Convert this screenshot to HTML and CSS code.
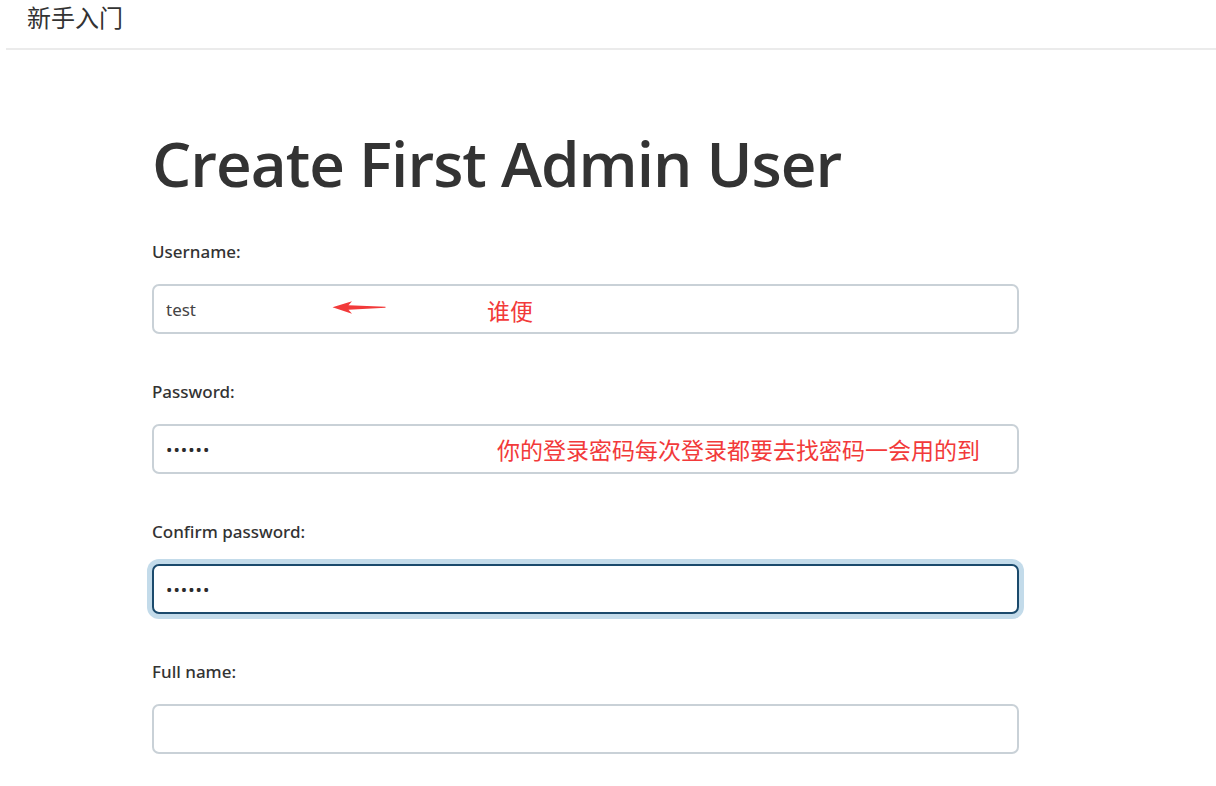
FILE: index.html
```html
<!DOCTYPE html>
<html lang="zh-CN">
<head>
<meta charset="utf-8">
<title>Create First Admin User</title>
<link rel="stylesheet" href="styles.css">
</head>
<body>
<header class="topbar">
  <span class="topbar-title">新手入门</span>
</header>
<main class="content">
  <h1 class="title">Create First Admin User</h1>
  <form class="form">
    <div class="field">
      <label class="label" for="username">Username:</label>
      <div class="input-wrap">
        <input class="input" id="username" type="text" value="test">
        <svg class="note-arrow" width="54" height="13" viewBox="0 0 54 13" aria-hidden="true">
          <path d="M0.5 6.3 L20 0.3 L16.5 4.2 L53.5 5.8 L53.5 6.8 L16.5 8.7 L20 12.7 Z" fill="#f23a3a"/>
        </svg>
        <span class="note note-user">谁便</span>
      </div>
    </div>
    <div class="field">
      <label class="label" for="password">Password:</label>
      <div class="input-wrap">
        <input class="input input-pass" id="password" type="password" value="123456">
        <span class="note note-pass">你的登录密码每次登录都要去找密码一会用的到</span>
      </div>
    </div>
    <div class="field">
      <label class="label" for="confirm">Confirm password:</label>
      <div class="input-wrap">
        <input class="input input-pass is-focused" id="confirm" type="password" value="123456">
      </div>
    </div>
    <div class="field">
      <label class="label" for="fullname">Full name:</label>
      <div class="input-wrap">
        <input class="input" id="fullname" type="text" value="">
      </div>
    </div>
  </form>
</main>
</body>
</html>
```

FILE: styles.css
```css
html, body {
  margin: 0;
  padding: 0;
  background: #ffffff;
  overflow: hidden;
}

body {
  font-family: "Noto Sans", "Open Sans", "Noto Sans CJK SC", sans-serif;
  color: #333333;
}

.topbar {
  margin-left: 6px;
  height: 48px;
  padding-left: 21px;
  border-bottom: 2px solid #ebebeb;
}

.topbar-title {
  display: block;
  font-family: "Noto Sans CJK SC", sans-serif;
  font-size: 24px;
  line-height: 34px;
  color: #333333;
}

.content {
  padding-left: 152px;
  width: 867px;
}

.title {
  margin: 76px 0 42px 0;
  font-family: "Open Sans", "Noto Sans", sans-serif;
  font-weight: 600;
  font-size: 62px;
  line-height: 1.2;
  color: #333333;
  letter-spacing: -1px;
}

.form {
  margin: 0;
}

.field {
  margin-bottom: 48px;
}

.label {
  display: block;
  font-size: 17px;
  line-height: 20px;
  font-weight: 500;
  color: #333333;
  margin-bottom: 22px;
}

.input-wrap {
  position: relative;
}

.input {
  display: block;
  box-sizing: border-box;
  width: 867px;
  height: 50px;
  margin: 0;
  padding: 0 12px;
  border: 2px solid #c9d1d7;
  border-radius: 7px;
  background: #ffffff;
  font-family: "Noto Sans", sans-serif;
  font-size: 17px;
  color: #444444;
  outline: none;
}

.input-pass {
  font-size: 17px;
  color: #2b2b2b;
  letter-spacing: 1px;
}

.is-focused {
  border-color: #1b4a6c;
  box-shadow: 0 0 0 5px #c3dbea;
}

.note {
  position: absolute;
  font-family: "Noto Sans CJK SC", sans-serif;
  font-size: 23px;
  line-height: 30px;
  color: #f23a3a;
  white-space: nowrap;
}

.note-user {
  left: 335px;
  top: 11px;
}

.note-pass {
  left: 345px;
  top: 10px;
}

.note-arrow {
  position: absolute;
  left: 180px;
  top: 17px;
}
```
